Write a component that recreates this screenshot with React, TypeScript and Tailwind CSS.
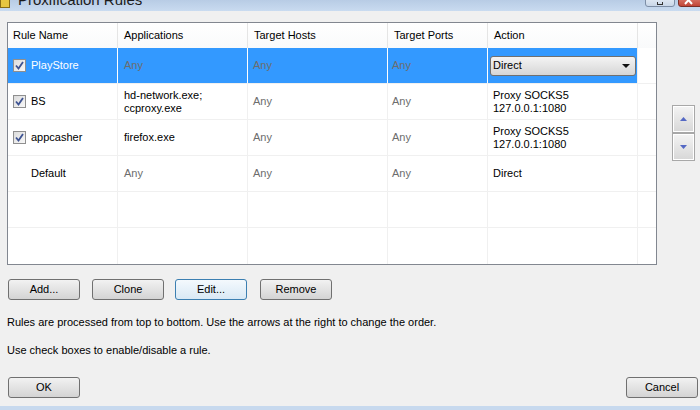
import React from "react";

type Rule = {
  name: string;
  checkbox: boolean;
  apps: string[];
  appsAny: boolean;
  action: string[];
  selected?: boolean;
};

const rules: Rule[] = [
  { name: "PlayStore", checkbox: true, apps: ["Any"], appsAny: true, action: ["Direct"], selected: true },
  { name: "BS", checkbox: true, apps: ["hd-network.exe;", "ccproxy.exe"], appsAny: false, action: ["Proxy SOCKS5", "127.0.0.1:1080"] },
  { name: "appcasher", checkbox: true, apps: ["firefox.exe"], appsAny: false, action: ["Proxy SOCKS5", "127.0.0.1:1080"] },
  { name: "Default", checkbox: false, apps: ["Any"], appsAny: true, action: ["Direct"] },
];

function CheckBox() {
  return (
    <div className="w-[13px] h-[13px] border border-[#8f8f8f] bg-gradient-to-br from-[#dcdcdc] to-[#f8f8f8] flex items-center justify-center">
      <svg width="9" height="9" viewBox="0 0 9 9">
        <path d="M1 4.5 L3.5 7.5 L8 1" fill="none" stroke="#3e5392" strokeWidth="1.8" />
      </svg>
    </div>
  );
}

function WinButton({ label, focused, className }: { label: string; focused?: boolean; className?: string }) {
  return (
    <div
      className={`w-[72px] h-[21px] rounded-[3px] border flex items-center justify-center text-[11px] text-black ${
        focused
          ? "border-[#3c7fb1] bg-gradient-to-b from-[#f4f9fd] to-[#d9e9f5]"
          : "border-[#707070] bg-gradient-to-b from-[#f2f2f2] to-[#d4d4d4]"
      } ${className ?? ""}`}
    >
      {label}
    </div>
  );
}

function ArrowButton({ up }: { up: boolean }) {
  return (
    <div className="w-[23px] h-[28px] border border-[#a8a8a8] p-px bg-white">
      <div className="w-full h-full bg-gradient-to-b from-[#f3f3f3] to-[#d8d8d8] flex items-center justify-center">
        <svg width="7" height="4" viewBox="0 0 7 4">
          {up ? <path d="M0 4 L3.5 0 L7 4 Z" fill="#5468c4" /> : <path d="M0 0 L3.5 4 L7 0 Z" fill="#5468c4" />}
        </svg>
      </div>
    </div>
  );
}

const cols = ["w-[110px]", "w-[130px]", "w-[140px]", "w-[100px]", "w-[150px]"];

export default function App() {
  const headers = ["Rule Name", "Applications", "Target Hosts", "Target Ports", "Action"];
  return (
    <div
      className="relative w-[700px] h-[410px] bg-[#f0f0f0] overflow-hidden text-[11px] text-black"
      style={{ fontFamily: '"Liberation Sans", Arial, sans-serif' }}
    >
      {/* title bar */}
      <div className="relative h-[11px] bg-gradient-to-b from-[#b8cce5] to-[#c9dbf0] overflow-hidden">
        <div className="absolute left-0 top-[-4px] w-[10px] h-[12px] bg-[#e8c640] border border-[#8a6d14]" />
        <div className="absolute left-[18px] top-[-9px] text-[15px] leading-[18px] text-[#1b1b1b]">Proxification Rules</div>
        <div className="absolute left-[645px] top-[-3px] w-[30px] h-[10px] rounded-b-[3px] border border-[#7d8ea6] bg-gradient-to-b from-[#e3ebf5] to-[#c9d7e8] flex items-end justify-center">
          <div className="w-[6px] h-[3px] border border-[#333] border-t-0 mb-[1px]" />
        </div>
        <div className="absolute left-[678px] top-[-3px] w-[30px] h-[10px] rounded-b-[3px] border border-[#7a2e27] bg-gradient-to-b from-[#d9776b] to-[#c14436]">
          <svg className="absolute left-[5px] top-[0px]" width="10" height="8" viewBox="0 0 10 8">
            <path d="M1 -2 L8 6 M8 -2 L1 6" stroke="white" strokeWidth="2" />
          </svg>
        </div>
      </div>

      <div className="flex mt-[11px]">
        {/* table */}
        <div className="ml-[7px] w-[650px] h-[243px] border border-[#828790] bg-white flex flex-col">
          <div className="flex h-[25px] bg-gradient-to-b from-white to-[#f9fafb]">
            {headers.map((h, i) => (
              <div key={h} className={`${cols[i]} border-r border-[#e5e5e5] flex items-center ${i === 0 ? "pl-[5px]" : "pl-[6px]"}`}>
                {h}
              </div>
            ))}
            <div className="flex-1" />
          </div>
          {rules.map((r) => (
            <div key={r.name} className="flex h-[36px] border-b border-[#f0f0f0]">
              <div className={`flex ${r.selected ? "bg-[#3399ff]" : ""}`}>
                <div className={`${cols[0]} border-r ${r.selected ? "border-white text-white" : "border-[#f0f0f0]"} flex items-center pl-[5px]`}>
                  <div className="w-[13px] mr-[5px]">{r.checkbox && <CheckBox />}</div>
                  {r.name}
                </div>
                <div
                  className={`${cols[1]} border-r ${r.selected ? "border-white" : "border-[#f0f0f0]"} flex flex-col justify-center pl-[6px] leading-[13px] ${
                    r.appsAny ? "text-[#6d6d6d]" : "text-black"
                  }`}
                >
                  {r.apps.map((a) => (
                    <div key={a}>{a}</div>
                  ))}
                </div>
                <div className={`${cols[2]} border-r ${r.selected ? "border-white" : "border-[#f0f0f0]"} flex items-center pl-[5px] text-[#6d6d6d]`}>Any</div>
                <div className={`${cols[3]} border-r ${r.selected ? "border-white" : "border-[#f0f0f0]"} flex items-center pl-[4px] text-[#6d6d6d]`}>Any</div>
                <div className={`${cols[4]} border-r border-[#f0f0f0] flex flex-col justify-center pl-[5px] leading-[13px]`}>
                  {r.selected ? (
                    <div className="ml-[-3px] w-[146px] h-[20px] rounded-[3px] border border-[#707070] bg-gradient-to-b from-[#f4f4f4] to-[#d6d6d6] flex items-center justify-between pl-[2px] pr-[5px]">
                      <span>Direct</span>
                      <svg width="8" height="4" viewBox="0 0 8 4">
                        <path d="M0 0 L8 0 L4 4 Z" fill="#111" />
                      </svg>
                    </div>
                  ) : (
                    r.action.map((a) => <div key={a}>{a}</div>)
                  )}
                </div>
              </div>
              <div className="flex-1" />
            </div>
          ))}
          {[0, 1].map((k) => (
            <div key={k} className={`flex h-[36px] ${k === 0 ? "border-b border-[#f0f0f0]" : ""}`}>
              {cols.map((c) => (
                <div key={c} className={`${c} border-r border-[#f0f0f0]`} />
              ))}
              <div className="flex-1" />
            </div>
          ))}
        </div>

        {/* reorder buttons */}
        <div className="ml-[15px] mt-[83px] flex flex-col">
          <ArrowButton up />
          <ArrowButton up={false} />
        </div>
      </div>

      {/* action buttons */}
      <div className="flex mt-[14px] ml-[8px]">
        <WinButton label="Add..." />
        <WinButton label="Clone" className="ml-[12px]" />
        <WinButton label="Edit..." focused className="ml-[11px]" />
        <WinButton label="Remove" className="ml-[13px]" />
      </div>

      <div className="ml-[7px] mt-[16px] leading-[13px]">
        Rules are processed from top to bottom. Use the arrows at the right to change the order.
      </div>
      <div className="ml-[7px] mt-[15px] leading-[13px]">Use check boxes to enable/disable a rule.</div>

      <div className="flex justify-between mt-[20px] ml-[8px] mr-[2px]">
        <WinButton label="OK" />
        <WinButton label="Cancel" />
      </div>

      <div className="absolute left-0 bottom-0 w-full h-[4px] bg-[#c7d9ee]" />
    </div>
  );
}
